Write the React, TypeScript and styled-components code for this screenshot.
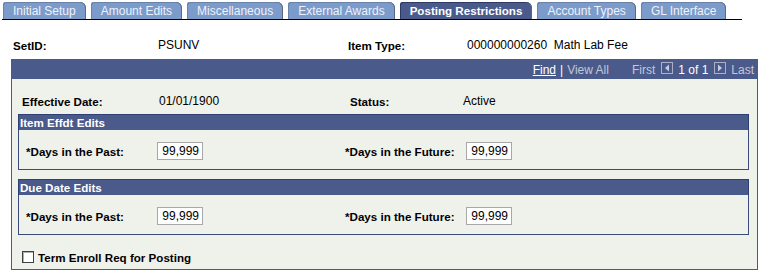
import React from "react";
import styled, { createGlobalStyle } from "styled-components";

const HEADER_BLUE = "#4a5a8b";
const TAB_BLUE = "#7b9bcb";
const BODY_BG = "#eff1eb";

const GlobalStyle = createGlobalStyle`
  body {
    margin: 0;
    background: #ffffff;
    font-family: "Liberation Sans", Arial, sans-serif;
    font-size: 12px;
    color: #000;
  }
`;

const Page = styled.div`
  padding-top: 2px;
  width: 762px;
`;

const TabBar = styled.div`
  display: flex;
  gap: 5px;
  width: 740px;
  margin-left: 2px;
  padding-left: 1px;
  border-bottom: 1px solid #000;
  box-sizing: border-box;
`;

const Tab = styled.div<{ $active?: boolean }>`
  height: 17px;
  line-height: 18px;
  padding: 0 10px;
  background: ${(p) => (p.$active ? HEADER_BLUE : TAB_BLUE)};
  color: ${(p) => (p.$active ? "#ffffff" : "#eef2fa")};
  font-weight: ${(p) => (p.$active ? "bold" : "normal")};
  font-size: ${(p) => (p.$active ? "11.6px" : "12px")};
  border-top-left-radius: 3px;
  border-top-right-radius: 6px;
  box-shadow: inset -1px 0 0 #5b6680, inset 1px 1px 0 ${(p) => (p.$active ? "#2e3a66" : "#6a82aa")};
  white-space: nowrap;
`;

const KeyRow = styled.div`
  display: grid;
  grid-template-columns: 145px 190px 119px auto;
  align-items: center;
  height: 16px;
  margin: 17px 0 0 13px;
`;

const Label = styled.span`
  font-weight: bold;
  font-size: 11.6px;
  white-space: nowrap;
`;

const Value = styled.span`
  white-space: pre;
`;

const Panel = styled.div`
  margin: 6px 0 0 11px;
  width: 747px;
  box-sizing: border-box;
  border: 1px solid ${HEADER_BLUE};
  background: ${BODY_BG};
  padding-bottom: 6px;
`;

const PanelHeader = styled.div`
  height: 19px;
  background: ${HEADER_BLUE};
  display: flex;
  justify-content: flex-end;
  align-items: center;
  padding-right: 3px;
  color: #ffffff;
  font-size: 12px;
`;

const NavLink = styled.span`
  color: #ffffff;
  text-decoration: underline;
`;

const NavText = styled.span<{ $dim?: boolean; $gap?: number }>`
  color: ${(p) => (p.$dim ? "#c3c8d6" : "#ffffff")};
  margin-left: ${(p) => p.$gap ?? 0}px;
`;

const NavButton = styled.span`
  display: inline-flex;
  margin: 0 5px 0 6px;
  position: relative;
  top: -2px;
`;

const PanelBody = styled.div`
  padding: 14px 8px 0 6px;
`;

const InfoRow = styled.div`
  display: grid;
  grid-template-columns: 137px 191px 113px auto;
  align-items: center;
  height: 16px;
  margin: 0 0 5px 4px;
`;

const Section = styled.div<{ $spaced?: boolean }>`
  margin-top: ${(p) => (p.$spaced ? 9 : 0)}px;
`;

const SectionTitle = styled.div`
  height: 16px;
  line-height: 16px;
  background: ${HEADER_BLUE};
  border: 1px solid #2f3f72;
  border-bottom: none;
  box-sizing: border-box;
  color: #ffffff;
  font-weight: bold;
  font-size: 11.6px;
  padding-left: 1px;
`;

const SectionBody = styled.div`
  border: 1px solid #3b4b7e;
  border-top: none;
  padding: 12px 0 9px 7px;
`;

const FieldRow = styled.div`
  display: grid;
  grid-template-columns: 131px 188px 121px auto;
  align-items: center;
`;

const NumberBox = styled.div`
  width: 46px;
  height: 18px;
  box-sizing: border-box;
  border: 1px solid #a8a8a8;
  background: #ffffff;
  text-align: right;
  padding-right: 3px;
  line-height: 16px;
`;

const CheckRow = styled.div`
  display: flex;
  align-items: center;
  gap: 4px;
  margin: 16px 0 0 4px;
  height: 12px;
`;

const CheckBox = styled.span`
  width: 12px;
  height: 12px;
  box-sizing: border-box;
  border: 1px solid #404040;
  background: #ffffff;
  box-shadow: inset 1px 1px 0 #b0b0b0;
`;

const Arrow = ({ dir }: { dir: "left" | "right" }) => (
  <svg width="12" height="12" viewBox="0 0 12 12">
    <rect x="0.5" y="0.5" width="11" height="11" fill="none" stroke="#aab0c6" />
    {dir === "left" ? (
      <polygon points="8,2.5 8,9.5 4,6" fill="#c8ccd8" />
    ) : (
      <polygon points="4,2.5 4,9.5 8,6" fill="#c8ccd8" />
    )}
  </svg>
);

const tabs = [
  "Initial Setup",
  "Amount Edits",
  "Miscellaneous",
  "External Awards",
  "Posting Restrictions",
  "Account Types",
  "GL Interface",
];

const EditSection = ({ title, spaced }: { title: string; spaced?: boolean }) => (
  <Section $spaced={spaced}>
    <SectionTitle>{title}</SectionTitle>
    <SectionBody>
      <FieldRow>
        <Label>*Days in the Past:</Label>
        <NumberBox>99,999</NumberBox>
        <Label>*Days in the Future:</Label>
        <NumberBox>99,999</NumberBox>
      </FieldRow>
    </SectionBody>
  </Section>
);

const App = () => {
  return (
    <Page>
      <GlobalStyle />
      <TabBar>
        {tabs.map((t) => (
          <Tab key={t} $active={t === "Posting Restrictions"}>
            {t}
          </Tab>
        ))}
      </TabBar>

      <KeyRow>
        <Label>SetID:</Label>
        <Value>PSUNV</Value>
        <Label>Item Type:</Label>
        <Value>000000000260  Math Lab Fee</Value>
      </KeyRow>

      <Panel>
        <PanelHeader>
          <NavLink>Find</NavLink>
          <NavText $gap={4}>|</NavText>
          <NavText $dim $gap={4}>View All</NavText>
          <NavText $dim $gap={23}>First</NavText>
          <NavButton>
            <Arrow dir="left" />
          </NavButton>
          <NavText>1 of 1</NavText>
          <NavButton>
            <Arrow dir="right" />
          </NavButton>
          <NavText $dim>Last</NavText>
        </PanelHeader>

        <PanelBody>
          <InfoRow>
            <Label>Effective Date:</Label>
            <Value>01/01/1900</Value>
            <Label>Status:</Label>
            <Value>Active</Value>
          </InfoRow>

          <EditSection title="Item Effdt Edits" />
          <EditSection title="Due Date Edits" spaced />

          <CheckRow>
            <CheckBox />
            <Label>Term Enroll Req for Posting</Label>
          </CheckRow>
        </PanelBody>
      </Panel>
    </Page>
  );
};

export default App;
